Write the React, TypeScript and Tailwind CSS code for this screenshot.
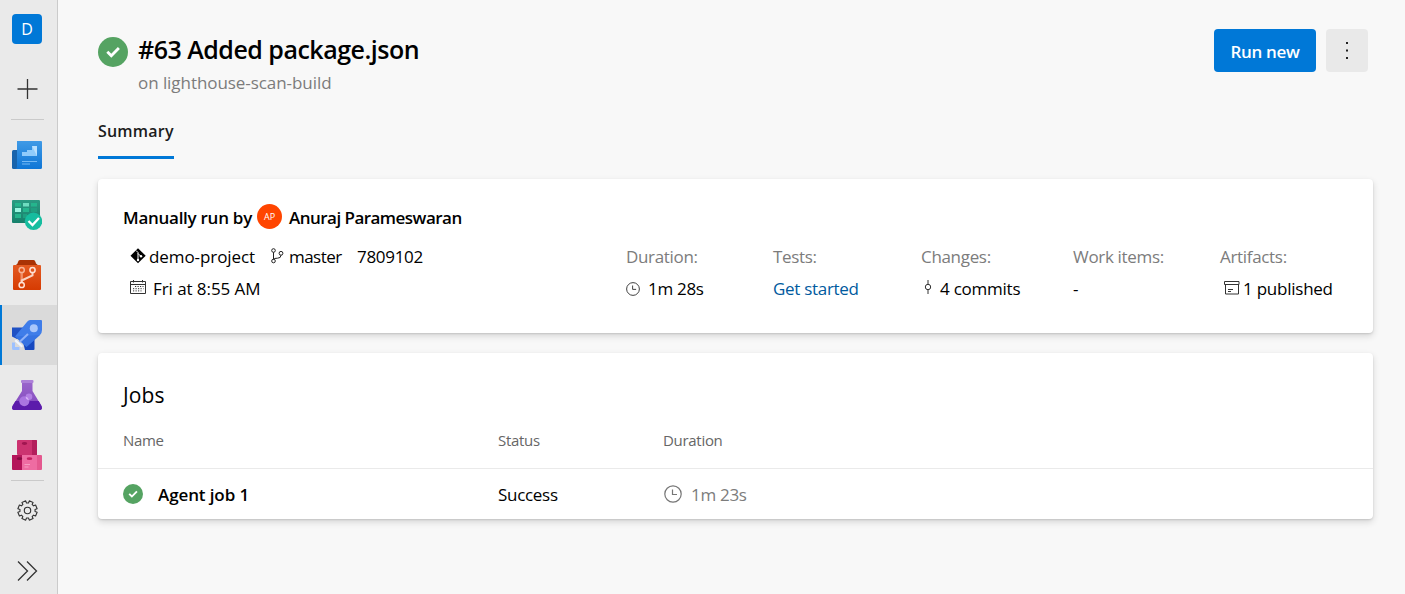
import type { ReactNode } from "react";

function CheckBadge({ size }: { size: number }) {
  return (
    <svg width={size} height={size} viewBox="0 0 30 30" className="block shrink-0">
      <circle cx="15" cy="15" r="15" fill="#55a362" />
      <path d="M9.300 14.800l4 4 7.600-7.800" fill="none" stroke="#fff" strokeWidth="2.800" />
    </svg>
  );
}

function ClockIcon({ size, color }: { size: number; color: string }) {
  return (
    <svg width={size} height={size} viewBox="0 0 18 18" fill="none" stroke={color} strokeWidth="1.2" className="block shrink-0">
      <circle cx="9" cy="9" r="8.2" />
      <path d="M8.5 4.5v5h4.5" />
    </svg>
  );
}

function OverviewIcon() {
  return (
    <svg width="30" height="30" viewBox="0 0 30 30" className="block">
      <defs>
        <linearGradient id="ov" x1="0" y1="0" x2="0" y2="1">
          <stop offset="0" stopColor="#3f9ae6" />
          <stop offset="1" stopColor="#0f76d6" />
        </linearGradient>
      </defs>
      <path d="M0 11.500q0-1.500 1.500-1.500H6v19H1.500Q0 29 0 27.500z" fill="#1864ac" />
      <path d="M5 1h24q1 0 1 1v25.500q0 1.500-1.500 1.500H3q2 0 2-2z" fill="url(#ov)" />
      <path d="M10 12h5v4h-5zM15 10h5v6h-5zM20 6h5v10h-5z" fill="#8fcbfb" />
      <path d="M20 6h5v10z" fill="#b9e0fe" />
      <path d="M10 21.500h15M10 24h8" stroke="#74b9f5" strokeWidth="1.200" />
    </svg>
  );
}

function BoardsIcon() {
  return (
    <svg width="30" height="30" viewBox="0 0 30 30" className="block">
      <defs>
        <linearGradient id="bd" x1="0" y1="0" x2="0" y2="1">
          <stop offset="0" stopColor="#2b9b82" />
          <stop offset="1" stopColor="#16806b" />
        </linearGradient>
      </defs>
      <rect width="28" height="23" rx="1" fill="url(#bd)" />
      <path d="M3 3h6v3.500H3zM19 3h6v3.500h-6zM11 8h6v4h-6zM3 14h6v4H3z" fill="#25b58d" />
      <path d="M11 3h6v3.500h-6z" fill="#6fdcc0" />
      <path d="M3 8h6v4H3z" fill="#9af5e0" />
      <path d="M19 8h6v4h-6zM11 14h4v4h-4z" fill="#1f9f80" />
      <circle cx="21.500" cy="21.300" r="8.700" fill="#16bd9f" />
      <path d="M16.500 21l4 4 6.500-7" fill="none" stroke="#fff" strokeWidth="2.300" />
    </svg>
  );
}

function ReposIcon() {
  return (
    <svg width="30" height="30" viewBox="0 0 30 30" className="block">
      <defs>
        <linearGradient id="rp" x1="0" y1="0" x2="0" y2="1">
          <stop offset="0" stopColor="#e35a22" />
          <stop offset="1" stopColor="#d63b02" />
        </linearGradient>
      </defs>
      <path d="M6 2q.5-2 2-2h13.500q1.500 0 2 2l.5 1.500 3 2.500H3l2.500-2.500z" fill="#a93205" />
      <rect x="1" y="5" width="28" height="25" rx="1" fill="url(#rp)" />
      <g fill="none" stroke="#f7b497" strokeWidth="1.500">
        <path d="M9.700 12.500v10" stroke="#f08f68" strokeWidth="2.400" />
        <path d="M20.500 12.800v2.500L9.700 20.500v2" stroke="#fbd3c2" strokeWidth="2" />
        <circle cx="9.700" cy="10" r="2.600" />
        <circle cx="20.500" cy="10" r="2.600" stroke="#ffe2d6" />
        <circle cx="9.700" cy="25" r="2.600" stroke="#ffe2d6" />
      </g>
    </svg>
  );
}

function PipelinesIcon() {
  return (
    <svg width="30" height="30" viewBox="0 0 30 30" className="block">
      <path d="M0 7.500h11v10L5 19 0 16.500z" fill="#1f51c4" />
      <path d="M22.500 18v11q0 1-1 1H13l-2-8z" fill="#1648c0" />
      <path d="M18 0h11q1 0 1 1v9q0 3-2 5L14.500 27 3 16.500 14.500 2.500Q16 0 18 0z" fill="#3f7de9" />
      <path d="M3 16.500L14.500 27 28 15z" fill="#2d69dc" opacity=".5" />
      <circle cx="21.800" cy="8.200" r="4" fill="#a9c6fb" />
      <path d="M7.500 22l8.500-8" stroke="#8fb2f8" strokeWidth="2" />
      <path d="M4 19.500l7 6.500-1.500 1.500L2.500 21z" fill="#f0f6ff" />
      <path d="M0 22.500h3v4.500h4.500v3H1.500Q0 30 0 28.500z" fill="#9dc1ff" />
    </svg>
  );
}

function TestPlansIcon() {
  return (
    <svg width="30" height="30" viewBox="0 0 30 30" className="block">
      <defs>
        <linearGradient id="tp" x1="0" y1="0" x2="0" y2="1">
          <stop offset="0" stopColor="#9b66cc" />
          <stop offset="1" stopColor="#8047bc" />
        </linearGradient>
      </defs>
      <path d="M10 1h10.500v10L29.500 26q1.500 4-2.500 4H3q-4 0-2.500-4L10 11z" fill="url(#tp)" />
      <path d="M3.500 21h23.200l2.800 5q1.500 4-2.500 4H3q-4 0-2.500-4z" fill="#5c1cab" />
      <rect x="9" width="12.500" height="3" rx="1" fill="#ad80d8" />
      <circle cx="17" cy="16.700" r="3.300" fill="#b27ee4" />
      <circle cx="12.300" cy="21.200" r="5" fill="#aa75e0" />
      <path d="M13.700 16.500a5 5 0 0 1 3.300 3.400 3.300 3.300 0 0 1-3.300-3.400z" fill="#d6b3f5" />
    </svg>
  );
}

function ArtifactsNavIcon() {
  return (
    <svg width="30" height="30" viewBox="0 0 30 30" className="block">
      <rect x="5" width="20" height="15" rx="1" fill="#cc3370" />
      <path d="M20 0h4q1 0 1 1v14h-5z" fill="#b31f5c" />
      <ellipse cx="12.500" cy="3.500" rx="2.700" ry="1.400" fill="#a01650" />
      <path d="M0 15h10v15H1q-1 0-1-1z" fill="#b4155a" />
      <path d="M10 15h15v15H10z" fill="#ee6ca2" />
      <path d="M25 15h4q1 0 1 1v13q0 1-1 1h-4z" fill="#e4588f" />
      <ellipse cx="7.500" cy="18.700" rx="2.700" ry="1.400" fill="#850b40" />
      <ellipse cx="17.500" cy="18.700" rx="2.800" ry="1.400" fill="#c51f61" />
      <path d="M12.500 24.500H18M12.500 27h4" stroke="#f79cc2" strokeWidth="1" />
    </svg>
  );
}

function GearIcon() {
  const cogs = Array.from({ length: 8 }, (_, i) => {
    const polar = (r: number, deg: number) => {
      const a = ((i * 45 + 22.5 + deg) * Math.PI) / 180;
      return `${(10.5 + r * Math.cos(a)).toFixed(2)} ${(10.5 + r * Math.sin(a)).toFixed(2)}`;
    };
    return `${i ? "L" : "M"}${polar(9.8, -12)}L${polar(9.8, 12)}L${polar(7.6, 15)}L${polar(7.6, 30)}`;
  }).join("");
  return (
    <svg width="21" height="21" viewBox="0 0 21 21" fill="none" stroke="#333" strokeWidth="1.100" className="block">
      <path d={cogs + "Z"} strokeLinejoin="round" />
      <circle cx="10.500" cy="10.500" r="3.200" />
    </svg>
  );
}

function NavItem({ children, active }: { children: ReactNode; active?: boolean }) {
  return active ? (
    <a className="flex h-[60px] w-full shrink-0 items-center border-l-2 border-[#0078d7] bg-[#dadada] pl-[10px]">{children}</a>
  ) : (
    <a className="flex h-[60px] w-full shrink-0 items-center pl-3">{children}</a>
  );
}

function Stat({ label, className, children }: { label: string; className: string; children: ReactNode }) {
  return (
    <div className={className}>
      <div className="h-8 tracking-[-0.320px] text-[#7c7c7c]">{label}</div>
      <div className="flex h-8 whitespace-nowrap">{children}</div>
    </div>
  );
}

export default function App() {
  return (
    <div className="flex h-[594px] w-[1405px] overflow-hidden bg-[#f8f8f8] font-['Open_Sans','Noto_Sans',sans-serif] text-[17px] leading-8 tracking-[-0.300px] text-black">
      <nav className="flex w-[58px] shrink-0 flex-col border-r border-[#cbcbcb] bg-[#eaeaea]">
        <div className="flex h-[59px] shrink-0 items-start pt-3.5 pl-3">
          <div className="flex size-[30px] items-center justify-center rounded bg-[#0078d7] text-base text-white">D</div>
        </div>
        <div className="flex h-[60px] shrink-0 items-center pl-[17px]">
          <svg width="21" height="21" viewBox="0 0 21 21" className="block" stroke="#333" strokeWidth="1.300">
            <path d="M10.500 0v20M0.500 10h20" />
          </svg>
        </div>
        <div className="mx-auto h-px w-[33px] shrink-0 -translate-x-px bg-[#cacaca]" />
        <div className="h-[5px] shrink-0" />
        <NavItem><OverviewIcon /></NavItem>
        <NavItem><BoardsIcon /></NavItem>
        <NavItem><ReposIcon /></NavItem>
        <NavItem active><PipelinesIcon /></NavItem>
        <NavItem><TestPlansIcon /></NavItem>
        <div className="h-[55px] shrink-0 pt-[15px] pl-3"><ArtifactsNavIcon /></div>
        <div className="mx-auto h-px w-[33px] shrink-0 -translate-x-px bg-[#cacaca]" />
        <div className="flex h-[60px] shrink-0 items-center pb-px pl-[17px]"><GearIcon /></div>
        <div className="flex h-[60px] shrink-0 items-center pl-[17px]">
          <svg width="21" height="22" viewBox="0 0 21 22" className="block" fill="none" stroke="#333" strokeWidth="1.300">
            <path d="M1 1.500l9.500 9.500L1 20.500M10 1.500l9.500 9.500L10 20.500" />
          </svg>
        </div>
      </nav>

      <main className="flex min-w-0 flex-1 flex-col pl-10 pr-8">
        <header className="flex h-[110px] shrink-0 items-start pr-[5px]">
          <div className="pt-[37px]"><CheckBadge size={30} /></div>
          <div className="ml-2.5 flex-1 pt-[33px]">
            <h1 className="h-[34px] text-[25px] font-semibold tracking-[-0.5px]">#63 Added package.json</h1>
            <p className="tracking-[-0.060px] text-[#7c7c7c]">on lighthouse-scan-build</p>
          </div>
          <div className="flex gap-2.5 pt-[29px]">
            <button className="flex h-[43px] w-[102px] items-center justify-center rounded-sm bg-[#0078d7] pt-0.5 font-semibold text-white">Run new</button>
            <button className="flex h-[43px] w-[42px] items-center justify-center rounded-sm bg-[#e9e9e9]">
              <svg width="4" height="20" viewBox="0 0 4 20" className="block" fill="#222">
                <path d="M1 1h2v2H1zM1 8.500h2v2H1zM1 16h2v2H1z" />
              </svg>
            </button>
          </div>
        </header>

        <div className="flex h-[49px] shrink-0">
          <div className="h-[49px] w-[76px] border-b-[3px] border-[#0078d7] pt-[9px] text-base font-semibold leading-6 tracking-[0.200px] text-[#1c1c1c]">Summary</div>
        </div>

        <section className="mt-5 h-[154px] w-[1275px] shrink-0 rounded bg-white pt-[22px] pl-[25px] shadow-[0_3px_7px_rgba(0,0,0,0.14),0_1px_2px_rgba(0,0,0,0.12)]">
          <div className="flex h-8 items-center font-semibold tracking-[-0.530px]">
            <span className="w-[134px] pt-px tracking-[-0.270px]">Manually run by</span>
            <span className="mr-[7px] mb-px flex size-[25px] items-center justify-center rounded-full bg-[#ff4500] text-[9px] font-normal tracking-normal text-white">AP</span>
            <span className="pt-px">Anuraj Parameswaran</span>
          </div>
          <div className="flex pt-2">
            <div className="w-[503px] shrink-0">
              <div className="flex h-8">
                <svg width="17" height="16" viewBox="0 0 17 16" className="mt-[7px] mr-[2px] ml-[7px] block">
                  <path d="M8 0.300l7.700 7.400L8 15.200 0.500 7.700z" fill="#000" />
                  <path d="M6 2.500l2 2v7.500M8 5.500l3 3" stroke="#fff" strokeWidth="1" fill="none" />
                  <circle cx="8" cy="12" r="1.200" fill="#fff" /><circle cx="11" cy="8.300" r="1.200" fill="#fff" />
                </svg>
                <span className="w-[122px] tracking-[-0.080px]">demo-project</span>
                <svg width="13" height="16" viewBox="0 0 13 16" className="mt-[7px] mr-[5px] block" fill="none" stroke="#222" strokeWidth="1">
                  <circle cx="2.500" cy="2.500" r="1.800" /><circle cx="2.500" cy="13" r="1.800" /><circle cx="10" cy="5.300" r="1.900" />
                  <path d="M2.500 4.300v6.900M10 7.200q0 3-3.500 3-3.500 0-4 1" />
                </svg>
                <span className="w-[68px] tracking-[-0.550px]">master</span>
                <span>7809102</span>
              </div>
              <div className="flex h-8">
                <svg width="17" height="16" viewBox="0 0 17 16" className="mt-[7px] mr-[6px] ml-[7px] block" fill="none" stroke="#333" strokeWidth="1">
                  <path d="M.5 1.500h15v12H.5zM.5 4.500h15M3.500 0v2.500M12.500 0v2.500" />
                  <path d="M5 6.500h8.500M3 8.700h10.500M3 10.900h8.500" strokeDasharray="1.200 1.300" />
                </svg>
                <span className="tracking-[-0.070px]">Fri at 8:55 AM</span>
              </div>
            </div>
            <Stat label="Duration:" className="w-[147px]">
              <span className="mt-[9px] mr-2"><ClockIcon size={14} color="#333" /></span>1m 28s
            </Stat>
            <Stat label="Tests:" className="w-[148px]"><a className="text-[#005a9e]">Get started</a></Stat>
            <Stat label="Changes:" className="w-[152px]">
              <svg width="8" height="15" viewBox="0 0 8 15" className="mt-[7px] mr-2 ml-[3px] block" fill="none" stroke="#333">
                <circle cx="4" cy="7" r="2.700" /><path d="M4 0v4.300M4 9.700V14" />
              </svg><span className="tracking-[-0.240px]">4 commits</span>
            </Stat>
            <Stat label="Work items:" className="w-[147px]">-</Stat>
            <Stat label="Artifacts:" className="w-[130px]">
              <svg width="16" height="14" viewBox="0 0 16 14" className="mt-2 mr-[3px] ml-1 block" fill="none" stroke="#333">
                <path d="M.5.5h14.500v3H.5zM1.500 3.500v9.500h13V3.500M4 8.500h5M4 10.500h3" />
              </svg><span className="tracking-[-0.240px]">1 published</span>
            </Stat>
          </div>
        </section>

        <section className="mt-5 h-[166px] w-[1275px] shrink-0 rounded bg-white shadow-[0_3px_7px_rgba(0,0,0,0.14),0_1px_2px_rgba(0,0,0,0.12)]">
          <h2 className="h-[66px] pt-[26px] pl-[25px] text-[21px] tracking-[0.100px]">Jobs</h2>
          <div className="flex h-[50px] border-b border-[#eaeaea] pt-[5px] pl-[25px] text-[15px] text-[#666]">
            <span className="w-[375px]">Name</span>
            <span className="w-[165px]">Status</span>
            <span>Duration</span>
          </div>
          <div className="flex h-[50px] items-center pl-[25px]">
            <CheckBadge size={20} />
            <span className="ml-[15px] w-[340px] pt-0.5 font-semibold tracking-[-0.110px]">Agent job 1</span>
            <span className="w-[166px] pt-0.5">Success</span>
            <ClockIcon size={18} color="#767676" />
            <span className="ml-[9px] pt-0.5 text-[#7c7c7c]">1m 23s</span>
          </div>
        </section>
      </main>
    </div>
  );
}
